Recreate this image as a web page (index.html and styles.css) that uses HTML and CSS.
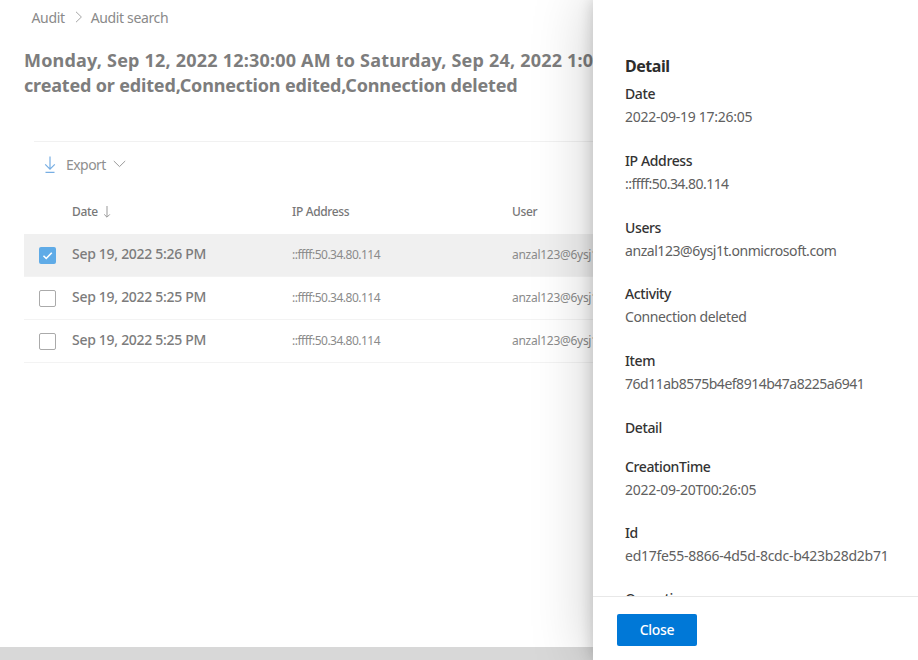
FILE: index.html
```html
<!DOCTYPE html>
<html lang="en">
<head>
<meta charset="utf-8">
<title>Audit search</title>
<link rel="stylesheet" href="styles.css">
</head>
<body>
<div class="app">
  <main class="page">
    <nav class="crumbs">
      <span>Audit</span>
      <svg class="crumb-sep" viewBox="0 0 8 12"><path d="M1 .8 6.4 6 1 11.2"/></svg>
      <span class="crumb-current">Audit search</span>
    </nav>
    <h1 class="title"><span class="title-first">Monday, Sep 12, 2022 12:30:00 AM to Saturday, Sep 24, 2022 1:0</span><br><span class="title-second">created or edited,Connection edited,Connection deleted</span></h1>
    <div class="toolbar">
      <svg class="export-icon" viewBox="0 0 12 18"><path d="M6 .5V13M1.2 8.3 6 13.1l4.8-4.8M1.5 16.3h9"/></svg>
      <span class="export">Export</span>
      <svg class="chevron" viewBox="0 0 13 8"><path d="M.8 1 6.5 6.6 12.2 1"/></svg>
    </div>
    <div class="table">
      <div class="row head">
        <span></span>
        <span class="sort"><span class="h-date">Date</span><svg class="sort-icon" viewBox="0 0 8 12"><path d="M4 0v11M1.2 8.4 4 11.2l2.8-2.8"/></svg></span>
        <span>IP Address</span>
        <span>User</span>
      </div>
      <div class="row selected">
        <span class="check on"><svg viewBox="0 0 16 16"><path d="M4.2 8.2 6.8 10.8 12 5.4"/></svg></span>
        <span class="date">Sep 19, 2022 5:26 PM</span>
        <span class="ip">::ffff:50.34.80.114</span>
        <span class="user">anzal123@6ysj1</span>
      </div>
      <div class="row">
        <span class="check"></span>
        <span class="date">Sep 19, 2022 5:25 PM</span>
        <span class="ip">::ffff:50.34.80.114</span>
        <span class="user">anzal123@6ysj1</span>
      </div>
      <div class="row">
        <span class="check"></span>
        <span class="date">Sep 19, 2022 5:25 PM</span>
        <span class="ip">::ffff:50.34.80.114</span>
        <span class="user">anzal123@6ysj1</span>
      </div>
    </div>
    <div class="scrollbar"></div>
  </main>
  <aside class="panel">
    <div class="content">
      <h2>Detail</h2>
      <dl>
        <div class="field"><dt>Date</dt><dd class="v-time">2022-09-19 17:26:05</dd></div>
        <div class="field"><dt>IP Address</dt><dd class="v-ip">::ffff:50.34.80.114</dd></div>
        <div class="field"><dt>Users</dt><dd class="v-user">anzal123@6ysj1t.onmicrosoft.com</dd></div>
        <div class="field"><dt>Activity</dt><dd class="v-text">Connection deleted</dd></div>
        <div class="field"><dt>Item</dt><dd class="v-hash">76d11ab8575b4ef8914b47a8225a6941</dd></div>
        <div class="field section"><dt>Detail</dt></div>
        <div class="field"><dt>CreationTime</dt><dd class="v-time">2022-09-20T00:26:05</dd></div>
        <div class="field"><dt>Id</dt><dd class="v-time">ed17fe55-8866-4d5d-8cdc-b423b28d2b71</dd></div>
        <div class="field last"><dt>Operation</dt></div>
      </dl>
    </div>
    <footer class="footer"><button class="close">Close</button></footer>
  </aside>
</div>
</body>
</html>
```
FILE: styles.css
```css
* { box-sizing: border-box; }
body { margin: 0; overflow: hidden; font-family: "Noto Sans", "Open Sans", sans-serif; background: #fff; }
svg { fill: none; display: block; flex: none; }
.app { display: flex; width: 918px; height: 660px; overflow: hidden; }

.page { width: 593px; height: 660px; overflow: hidden; display: flex; flex-direction: column; color: #7c7c7c; }
.crumbs { display: flex; align-items: center; height: 34px; padding-left: 31.5px; font-size: 14px; letter-spacing: -0.35px; color: #8a8a8a; }
.crumb-sep { width: 8px; height: 12px; margin: 0 8px 0 10px; stroke: #a5a5a5; }
.title { margin: 14px 0 0 24px; font-size: 18px; line-height: 25px; font-weight: 700; white-space: nowrap; color: #7d7d7d; }
.title-first { letter-spacing: 0.2px; }
.title-second { letter-spacing: -0.17px; }
.toolbar { display: flex; align-items: center; height: 49px; margin: 43px 0 0 34px; padding: 0 0 2px 10px; border-top: 1px solid #f1f1f1; font-size: 14px; color: #8f8f8f; }
.export-icon { width: 12px; height: 18px; stroke: #77aee3; stroke-width: 1.2; }
.export { margin: -1px 0 0 10px; letter-spacing: -0.55px; }
.chevron { width: 13px; height: 8px; margin: 0 0 2px 7px; stroke: #999; }

.table { margin-left: 24px; }
.row { display: grid; grid-template-columns: 48px 220px 220px 81px; align-items: center; height: 43.3px; padding-bottom: 1px; border-bottom: 1px solid #f3f3f3; white-space: nowrap; overflow: hidden; }
.head { height: 43.6px; padding-bottom: 0; border-bottom: 0; font-size: 12px; font-weight: 500; letter-spacing: -0.35px; color: #777; }
.sort { display: flex; align-items: center; }
.sort-icon { width: 8px; height: 12px; margin-left: 5px; stroke: #999; }
.selected { background: #f0f0f0; }
.check { width: 17px; height: 17px; margin: 2px 0 0 15px; border: 1px solid #aaa; border-radius: 2px; background: #fff; }
.check.on { margin-top: 3px; border: 0; background: #5fabe7; }
.check svg { width: 17px; height: 17px; stroke: #fff; stroke-width: 1.5; }
.date { margin-top: -2px; font-size: 14px; font-weight: 500; letter-spacing: -0.3px; }
.ip, .user { font-size: 12px; color: #8b8b8b; }
.ip { letter-spacing: -0.5px; }
.user { letter-spacing: -0.28px; }
.scrollbar { height: 13px; margin-top: auto; background: #d8d8d8; }

.panel { position: relative; width: 325px; height: 660px; display: flex; flex-direction: column; background: #fff; box-shadow: 0 0 57px rgba(0,0,0,.22), 0 0 14px rgba(0,0,0,.18); }
.content { height: 596px; overflow: hidden; padding: 55px 0 0 32px; white-space: nowrap; }
h2 { margin: 0; font-size: 16px; line-height: 23px; font-weight: 700; letter-spacing: -0.45px; color: #2c2c2c; }
dl { margin: 4px 0 0; }
.field { height: 66.8px; font-size: 14px; line-height: 23px; }
.section { height: 38.6px; }
.last { margin-top: -1px; }
dt { font-weight: 500; letter-spacing: -0.38px; color: #333; }
dd { margin: 0; color: #606060; }
.v-time { letter-spacing: -0.27px; }
.v-ip { letter-spacing: -0.54px; }
.v-user { letter-spacing: -0.44px; }
.v-text { letter-spacing: -0.38px; }
.v-hash { letter-spacing: -0.49px; }
.footer { height: 64px; padding: 17px 24px; border-top: 1px solid #e8e8e8; }
.close { display: block; width: 80px; height: 32px; padding: 0 0 1px; border: 0; border-radius: 2px; background: #0078d7; color: #fff; font: 500 14px "Noto Sans", sans-serif; letter-spacing: -0.3px; }
```
